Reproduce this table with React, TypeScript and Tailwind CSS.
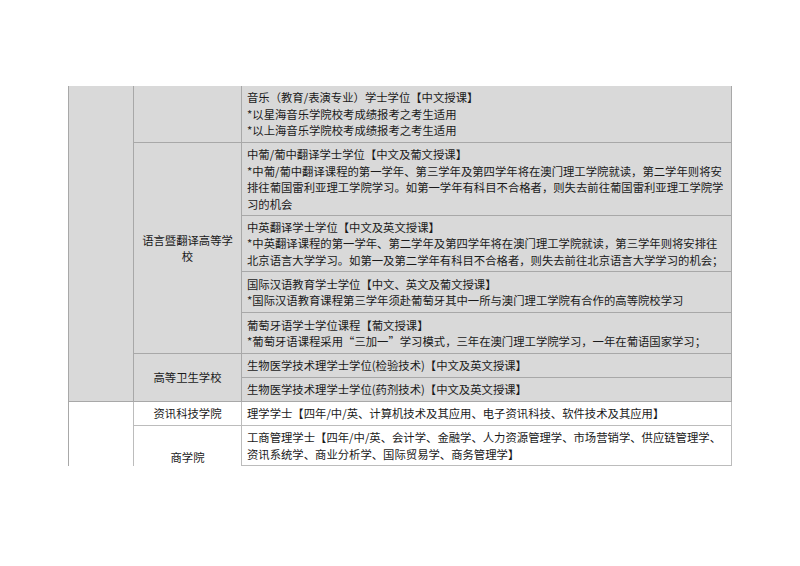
import React from 'react';

const gray = 'bg-[#d9d9d9] border-[#a8a8a8]';
const white = 'bg-white border-[#bcbcbc]';

const Cell: React.FC<{ className?: string; children?: React.ReactNode }> = ({ className = '', children }) => (
  <div className={`flex items-center border-r border-b px-[5px] ${className}`}>
    <div className="whitespace-nowrap">{children}</div>
  </div>
);

const Center: React.FC<{ className?: string; children?: React.ReactNode }> = ({ className = '', children }) => (
  <div className={`flex items-center justify-center text-center border-r border-b px-[5px] ${className}`}>
    <div>{children}</div>
  </div>
);

export default function App() {
  return (
    <div
      className="w-[800px] h-[566px] bg-white pt-[86px] text-[#1a1a1a] text-[11.35px] leading-[16.5px]"
      style={{ fontFamily: '"Noto Sans CJK SC", "Noto Sans", sans-serif' }}
    >
      <div className="ml-[68px] w-[664px] h-[380px] overflow-hidden border-l border-[#a8a8a8]">
        <div className="grid grid-cols-[65px_108px_490px] grid-rows-[57px_73px_56px_41px_41px_24px_24px_24px_40px_24px]">
          {/* left group column */}
          <div className={`col-start-1 row-start-1 row-span-7 border-r border-b ${gray}`} />
          <div className={`col-start-1 row-start-8 row-span-3 border-r ${white}`} />

          {/* school column */}
          <Center className={`col-start-2 row-start-1 ${gray}`} />
          <Center className={`col-start-2 row-start-2 row-span-4 ${gray}`}>
            语言暨翻译高等学
            <br />校
          </Center>
          <Center className={`col-start-2 row-start-6 row-span-2 ${gray}`}>高等卫生学校</Center>
          <Center className={`col-start-2 row-start-8 ${white}`}>资讯科技学院</Center>
          <Center className={`col-start-2 row-start-9 row-span-2 ${white}`}>商学院</Center>

          {/* programme column */}
          <Cell className={`col-start-3 row-start-1 ${gray}`}>
            音乐（教育/表演专业）学士学位【中文授课】
            <br />*以星海音乐学院校考成绩报考之考生适用
            <br />*以上海音乐学院校考成绩报考之考生适用
          </Cell>
          <Cell className={`col-start-3 row-start-2 ${gray}`}>
            中葡/葡中翻译学士学位【中文及葡文授课】
            <br />*中葡/葡中翻译课程的第一学年、第三学年及第四学年将在澳门理工学院就读，第二学年则将安
            <br />排往葡国雷利亚理工学院学习。如第一学年有科目不合格者，则失去前往葡国雷利亚理工学院学
            <br />习的机会
          </Cell>
          <Cell className={`col-start-3 row-start-3 ${gray}`}>
            中英翻译学士学位【中文及英文授课】
            <br />*中英翻译课程的第一学年、第二学年及第四学年将在澳门理工学院就读，第三学年则将安排往
            <br />北京语言大学学习。如第一及第二学年有科目不合格者，则失去前往北京语言大学学习的机会；
          </Cell>
          <Cell className={`col-start-3 row-start-4 ${gray}`}>
            国际汉语教育学士学位【中文、英文及葡文授课】
            <br />*国际汉语教育课程第三学年须赴葡萄牙其中一所与澳门理工学院有合作的高等院校学习
          </Cell>
          <Cell className={`col-start-3 row-start-5 ${gray}`}>
            葡萄牙语学士学位课程【葡文授课】
            <br />*葡萄牙语课程采用“三加一”学习模式，三年在澳门理工学院学习，一年在葡语国家学习；
          </Cell>
          <Cell className={`col-start-3 row-start-6 ${gray}`}>生物医学技术理学士学位(检验技术)【中文及英文授课】</Cell>
          <Cell className={`col-start-3 row-start-7 ${gray}`}>生物医学技术理学士学位(药剂技术)【中文及英文授课】</Cell>
          <Cell className={`col-start-3 row-start-8 ${white}`}>
            理学学士【四年/中/英、计算机技术及其应用、电子资讯科技、软件技术及其应用】
          </Cell>
          <Cell className={`col-start-3 row-start-9 ${white}`}>
            工商管理学士【四年/中/英、会计学、金融学、人力资源管理学、市场营销学、供应链管理学、
            <br />资讯系统学、商业分析学、国际贸易学、商务管理学】
          </Cell>
          <Cell className={`col-start-3 row-start-10 ${white}`} />
        </div>
      </div>
    </div>
  );
}
